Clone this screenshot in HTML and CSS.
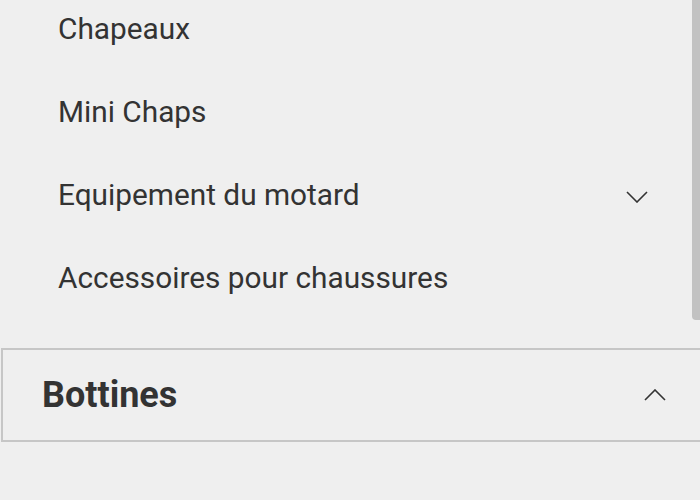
FILE: index.html
```html
<!DOCTYPE html>
<html lang="fr">
<head>
<meta charset="utf-8">
<title>Menu</title>
<link rel="stylesheet" href="styles.css">
</head>
<body>
<div class="scrollbar"></div>
<ul class="list">
  <li class="item"><span>Chapeaux</span></li>
  <li class="item"><span>Mini Chaps</span></li>
  <li class="item"><span>Equipement du motard</span>
    <svg class="chev down" width="22" height="12" viewBox="0 0 22 12"><path d="M1 1 L11 11 L21 1" fill="none" stroke="#333" stroke-width="1.6"/></svg>
  </li>
  <li class="item"><span>Accessoires pour chaussures</span></li>
</ul>
<div class="section">
  <span class="section-title">Bottines</span>
  <svg class="chev up" width="22" height="12" viewBox="0 0 22 12"><path d="M1 11 L11 1 L21 11" fill="none" stroke="#333" stroke-width="1.6"/></svg>
</div>
</body>
</html>
```
FILE: styles.css
```css
html, body {
  margin: 0;
  padding: 0;
  background: #efefef;
  width: 700px;
  height: 500px;
  overflow: hidden;
  font-family: Roboto, "Noto Sans", sans-serif;
  color: #333;
}
body { position: relative; }
.scrollbar {
  position: absolute;
  right: 0;
  top: 0;
  width: 8px;
  height: 320px;
  background: #c2c2c2;
  border-bottom-left-radius: 4px;
}
.list {
  list-style: none;
  margin: -13px 0 0 0;
  padding: 0;
}
.item {
  height: 83px;
  line-height: 83px;
  font-size: 29.8px;
  padding: 0 52px 0 58px;
  display: flex;
  align-items: center;
  justify-content: space-between;
}
.chev { display: block; }
.chev.down { margin-top: 5px; }
.section {
  margin: 29px 0 0 1px;
  height: 90px;
  border-top: 2px solid #c6c6c6;
  border-bottom: 2px solid #c6c6c6;
  border-left: 2px solid #c6c6c6;
  display: flex;
  align-items: center;
  justify-content: space-between;
  padding: 0 34px 0 39px;
}
.section-title {
  font-size: 36px;
  font-weight: 700;
  line-height: 90px;
}
```
